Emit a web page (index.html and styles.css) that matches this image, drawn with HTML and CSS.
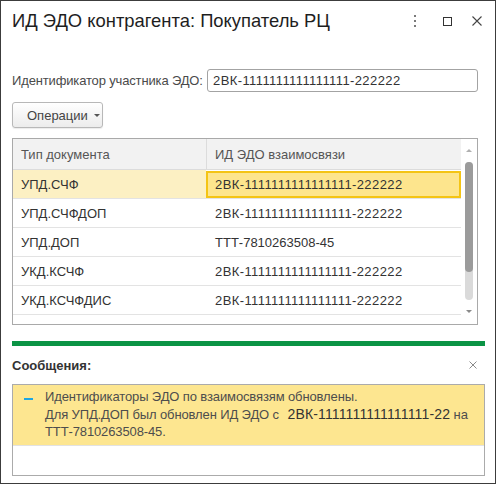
FILE: index.html
```html
<!DOCTYPE html>
<html lang="ru">
<head>
<meta charset="utf-8">
<title>ИД ЭДО контрагента</title>
<link rel="stylesheet" href="styles.css">
</head>
<body>
<div class="window">
  <div class="titlebar">
    <div class="title">ИД ЭДО контрагента: Покупатель РЦ</div>
    <div class="tb-icons">
      <div class="tb-btn kebab">
        <svg width="4" height="12" viewBox="0 0 4 12"><rect x="1" y="0" width="2" height="2" fill="#7a7a7a"/><rect x="1" y="5" width="2" height="2" fill="#7a7a7a"/><rect x="1" y="10" width="2" height="2" fill="#7a7a7a"/></svg>
      </div>
      <div class="tb-btn">
        <svg width="9" height="9" viewBox="0 0 9 9"><rect x="0.5" y="0.5" width="8" height="8" fill="none" stroke="#333" stroke-width="1"/></svg>
      </div>
      <div class="tb-btn">
        <svg width="10" height="10" viewBox="0 0 10 10"><path d="M0.5 0.5 L9.5 9.5 M9.5 0.5 L0.5 9.5" stroke="#444" stroke-width="1.1" fill="none"/></svg>
      </div>
    </div>
  </div>

  <div class="form">
    <div class="field-row">
      <label class="field-label">Идентификатор участника ЭДО:</label>
      <div class="input"><span class="id">2ВК-1111111111111111-222222</span></div>
    </div>

    <div class="toolbar">
      <div class="btn">Операции<span class="caret"></span></div>
    </div>

    <div class="table">
      <div class="grid">
        <div class="thead">
          <div class="th c1">Тип документа</div>
          <div class="th c2">ИД ЭДО взаимосвязи</div>
        </div>
        <div class="row selected">
          <div class="td c1">УПД.СЧФ</div>
          <div class="td c2"><span class="id">2ВК-1111111111111111-222222</span></div>
        </div>
        <div class="row">
          <div class="td c1">УПД.СЧФДОП</div>
          <div class="td c2"><span class="id">2ВК-1111111111111111-222222</span></div>
        </div>
        <div class="row">
          <div class="td c1">УПД.ДОП</div>
          <div class="td c2">ТТТ-7810263508-45</div>
        </div>
        <div class="row">
          <div class="td c1">УКД.КСЧФ</div>
          <div class="td c2"><span class="id">2ВК-1111111111111111-222222</span></div>
        </div>
        <div class="row">
          <div class="td c1">УКД.КСЧФДИС</div>
          <div class="td c2"><span class="id">2ВК-1111111111111111-222222</span></div>
        </div>
      </div>
      <div class="scroll">
        <div class="sb-arrow"><span class="tri-up"></span></div>
        <div class="sb-track"><div class="sb-thumb"></div></div>
        <div class="sb-arrow bottom"><span class="tri-down"></span></div>
      </div>
    </div>
  </div>

  <div class="messages">
    <div class="green-line"></div>
    <div class="msg-head">
      <div class="msg-title">Сообщения:</div>
      <svg class="msg-close" width="8" height="8" viewBox="0 0 8 8"><path d="M0.5 0.5 L7.5 7.5 M7.5 0.5 L0.5 7.5" stroke="#8a8a8a" stroke-width="1" fill="none"/></svg>
    </div>
    <div class="msg-box">
      <div class="msg-item">
        <span class="dash"></span>
        <div class="msg-text">Идентификаторы ЭДО по взаимосвязям обновлены.<br>Для УПД.ДОП был обновлен ИД ЭДО с <span class="strong">2ВК-1111111111111111-22</span> на<br>ТТТ-7810263508-45.</div>
      </div>
      <div class="msg-empty"></div>
    </div>
  </div>
</div>
</body>
</html>
```

FILE: styles.css
```css
html, body {
  margin: 0;
  padding: 0;
  background: #ffffff;
}

body {
  font-family: "Liberation Sans", Arial, sans-serif;
  font-size: 13px;
  color: #333;
}

.window {
  box-sizing: border-box;
  width: 496px;
  height: 484px;
  border: 1px solid #3c3c3c;
  display: flex;
  flex-direction: column;
  background: #fff;
}

.titlebar {
  height: 40px;
  display: flex;
  align-items: center;
  padding-left: 11px;
  padding-right: 3px;
}

.title {
  font-size: 18.4px;
  color: #1e1e1e;
  white-space: nowrap;
}

.tb-icons {
  margin-left: auto;
  display: flex;
  align-items: center;
}

.tb-btn {
  width: 30px;
  height: 30px;
  display: flex;
  align-items: center;
  justify-content: center;
}

.tb-btn.kebab {
  margin-right: 2px;
}

.form {
  padding: 0 17px 0 11px;
  display: flex;
  flex-direction: column;
}

.field-row {
  margin-top: 28px;
  display: flex;
  align-items: center;
  height: 23px;
}

.field-label {
  color: #4a4a4a;
  white-space: nowrap;
  letter-spacing: -0.15px;
}

.input {
  margin-left: auto;
  width: 271px;
  box-sizing: border-box;
  height: 23px;
  border: 1px solid #a3a3a3;
  border-radius: 3px;
  padding-left: 5px;
  display: flex;
  align-items: center;
  color: #333;
}

.id {
  letter-spacing: 0.4px;
}

.toolbar {
  margin-top: 10px;
  display: flex;
}

.btn {
  box-sizing: border-box;
  width: 91px;
  height: 26px;
  border: 1px solid #b8b8b8;
  border-radius: 3px;
  background: linear-gradient(#ffffff, #ececec);
  box-shadow: 0 1px 1px rgba(0,0,0,0.08);
  display: flex;
  align-items: center;
  padding-left: 14px;
  color: #444;
}

.caret {
  margin-left: 6px;
  width: 0;
  height: 0;
  border-left: 3px solid transparent;
  border-right: 3px solid transparent;
  border-top: 3px solid #555;
  margin-top: 1px;
}

.table {
  margin-top: 10px;
  box-sizing: border-box;
  height: 187px;
  border: 1px solid #a9a9a9;
  display: flex;
}

.grid {
  width: 449px;
  display: flex;
  flex-direction: column;
}

.thead {
  box-sizing: border-box;
  height: 31px;
  display: flex;
  background: #f2f2f2;
  border-bottom: 1px solid #dcdcdc;
}

.th {
  display: flex;
  align-items: center;
  color: #555;
  padding-left: 8px;
  box-sizing: border-box;
}

.th.c1 {
  width: 194px;
  border-right: 1px solid #dcdcdc;
}

.th.c2 {
  flex: 1;
}

.row {
  box-sizing: border-box;
  height: 29px;
  display: flex;
  border-bottom: 1px solid #e3e3e3;
}

.td {
  display: flex;
  align-items: center;
  box-sizing: border-box;
  color: #333;
  white-space: nowrap;
}

.td.c1 {
  width: 193px;
  padding-left: 8px;
}

.td.c2 {
  flex: 1;
  padding-left: 9px;
}

.row.selected .c1 {
  background: #fcf0c3;
}

.row.selected .c2 {
  background: #fde58d;
  border: 2px solid #f4c414;
  padding-left: 7px;
  height: 27px;
  margin-top: 1px;
}

.scroll {
  width: 16px;
  display: flex;
  flex-direction: column;
  align-items: center;
}

.sb-arrow {
  height: 22px;
  width: 16px;
  display: flex;
  align-items: center;
  justify-content: center;
}

.sb-arrow.bottom {
  height: 23px;
}

.tri-up {
  width: 0;
  height: 0;
  border-left: 3px solid transparent;
  border-right: 3px solid transparent;
  border-bottom: 3px solid #b0b0b0;
}

.tri-down {
  width: 0;
  height: 0;
  border-left: 3px solid transparent;
  border-right: 3px solid transparent;
  border-top: 3px solid #8a8a8a;
}

.sb-track {
  margin-top: 1px;
  width: 8px;
  height: 138px;
  border-radius: 4px;
  background: #dadada;
  display: flex;
  flex-direction: column;
}

.sb-thumb {
  height: 110px;
  border-radius: 4px;
  background: #9b9b9b;
}

.messages {
  padding: 0 10px 0 11px;
  display: flex;
  flex-direction: column;
}

.green-line {
  margin-top: 16px;
  height: 5px;
  background: #0b9445;
}

.msg-head {
  height: 38px;
  display: flex;
  align-items: center;
  padding-right: 8px;
}

.msg-title {
  font-weight: bold;
  color: #333;
}

.msg-close {
  margin-left: auto;
}

.msg-box {
  box-sizing: border-box;
  height: 92px;
  border: 1px solid #ababab;
  display: flex;
  flex-direction: column;
}

.msg-item {
  box-sizing: border-box;
  height: 61px;
  background: #fde690;
  border-bottom: 1px solid #e2e2e2;
  display: flex;
  padding-top: 3px;
}

.dash {
  flex: none;
  width: 9px;
  height: 2px;
  background: #1ea6e2;
  margin-left: 11px;
  margin-top: 10px;
  margin-right: 12px;
}

.msg-text {
  line-height: 17.5px;
  color: #4d4d4d;
  white-space: nowrap;
  letter-spacing: -0.12px;
}

.msg-text .strong {
  color: #333;
  font-size: 14px;
  margin-left: 5px;
  letter-spacing: 0.15px;
}

.msg-empty {
  flex: 1;
}
```
